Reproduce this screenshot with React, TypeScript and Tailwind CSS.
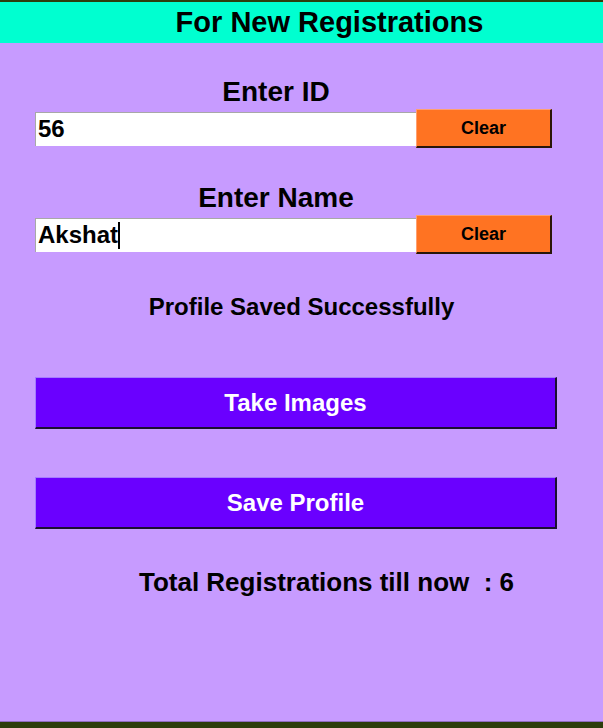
export default function App() {
  return (
    <div className="h-[728px] w-[603px] flex flex-col bg-[#c79bff] font-['Liberation_Sans',Arial,sans-serif] font-bold text-black overflow-hidden">
      <div className="h-[2px] bg-[#2d3d0c]" />
      <div className="h-[41px] bg-[#00ffd0] pl-[56px] text-center text-[29px] leading-[41px]">
        For New Registrations
      </div>

      <div className="flex-1 flex flex-col">
        <div className="mt-[33px] ml-[35px] w-[482px] h-8 text-center text-[28px] leading-8">Enter ID</div>
        <div className="mt-[1px] ml-[35px] flex items-center h-[39px]">
          <div className="w-[381px] h-[34px] bg-white border-t border-l border-[#a8a8a8] text-[24px] leading-[32px] pl-[2px]">
            56
          </div>
          <div className="w-[136px] h-[39px] bg-[#ff7322] border-t border-l border-t-[#ffa070] border-l-[#ffa070] border-b-2 border-r-2 border-b-[#2a1608] border-r-[#2a1608] flex items-center justify-center text-[18px]">
            Clear
          </div>
        </div>

        <div className="mt-[34px] ml-[35px] w-[482px] h-8 text-center text-[28px] leading-8">Enter Name</div>
        <div className="mt-[1px] ml-[35px] flex items-center h-[39px]">
          <div className="w-[381px] h-[34px] bg-white border-t border-l border-[#a8a8a8] text-[24px] leading-[32px] pl-[2px] flex items-center">
            Akshat
            <span className="inline-block w-[2px] h-[27px] bg-black" />
          </div>
          <div className="w-[136px] h-[39px] bg-[#ff7322] border-t border-l border-t-[#ffa070] border-l-[#ffa070] border-b-2 border-r-2 border-b-[#2a1608] border-r-[#2a1608] flex items-center justify-center text-[18px]">
            Clear
          </div>
        </div>

        <div className="mt-[37px] h-8 text-center text-[24px] leading-8">Profile Saved Successfully</div>

        <div className="mt-[54px] ml-[35px] w-[522px] h-[52px] bg-[#6a00ff] border-t border-l border-t-[#a57cff] border-l-[#a57cff] border-b-2 border-r-2 border-b-[#1a1030] border-r-[#1a1030] flex items-center justify-center text-white text-[24px]">
          Take Images
        </div>

        <div className="mt-[48px] ml-[35px] w-[522px] h-[52px] bg-[#6a00ff] border-t border-l border-t-[#a57cff] border-l-[#a57cff] border-b-2 border-r-2 border-b-[#1a1030] border-r-[#1a1030] flex items-center justify-center text-white text-[24px]">
          Save Profile
        </div>

        <div className="mt-[37px] pl-[50px] h-8 text-center text-[26px] leading-8 whitespace-pre">
          {"Total Registrations till now  : 6"}
        </div>
      </div>

      <div className="h-[1px] bg-[#8f6cc0]" />
      <div className="h-[6px] bg-[#2d3d0c]" />
    </div>
  );
}
